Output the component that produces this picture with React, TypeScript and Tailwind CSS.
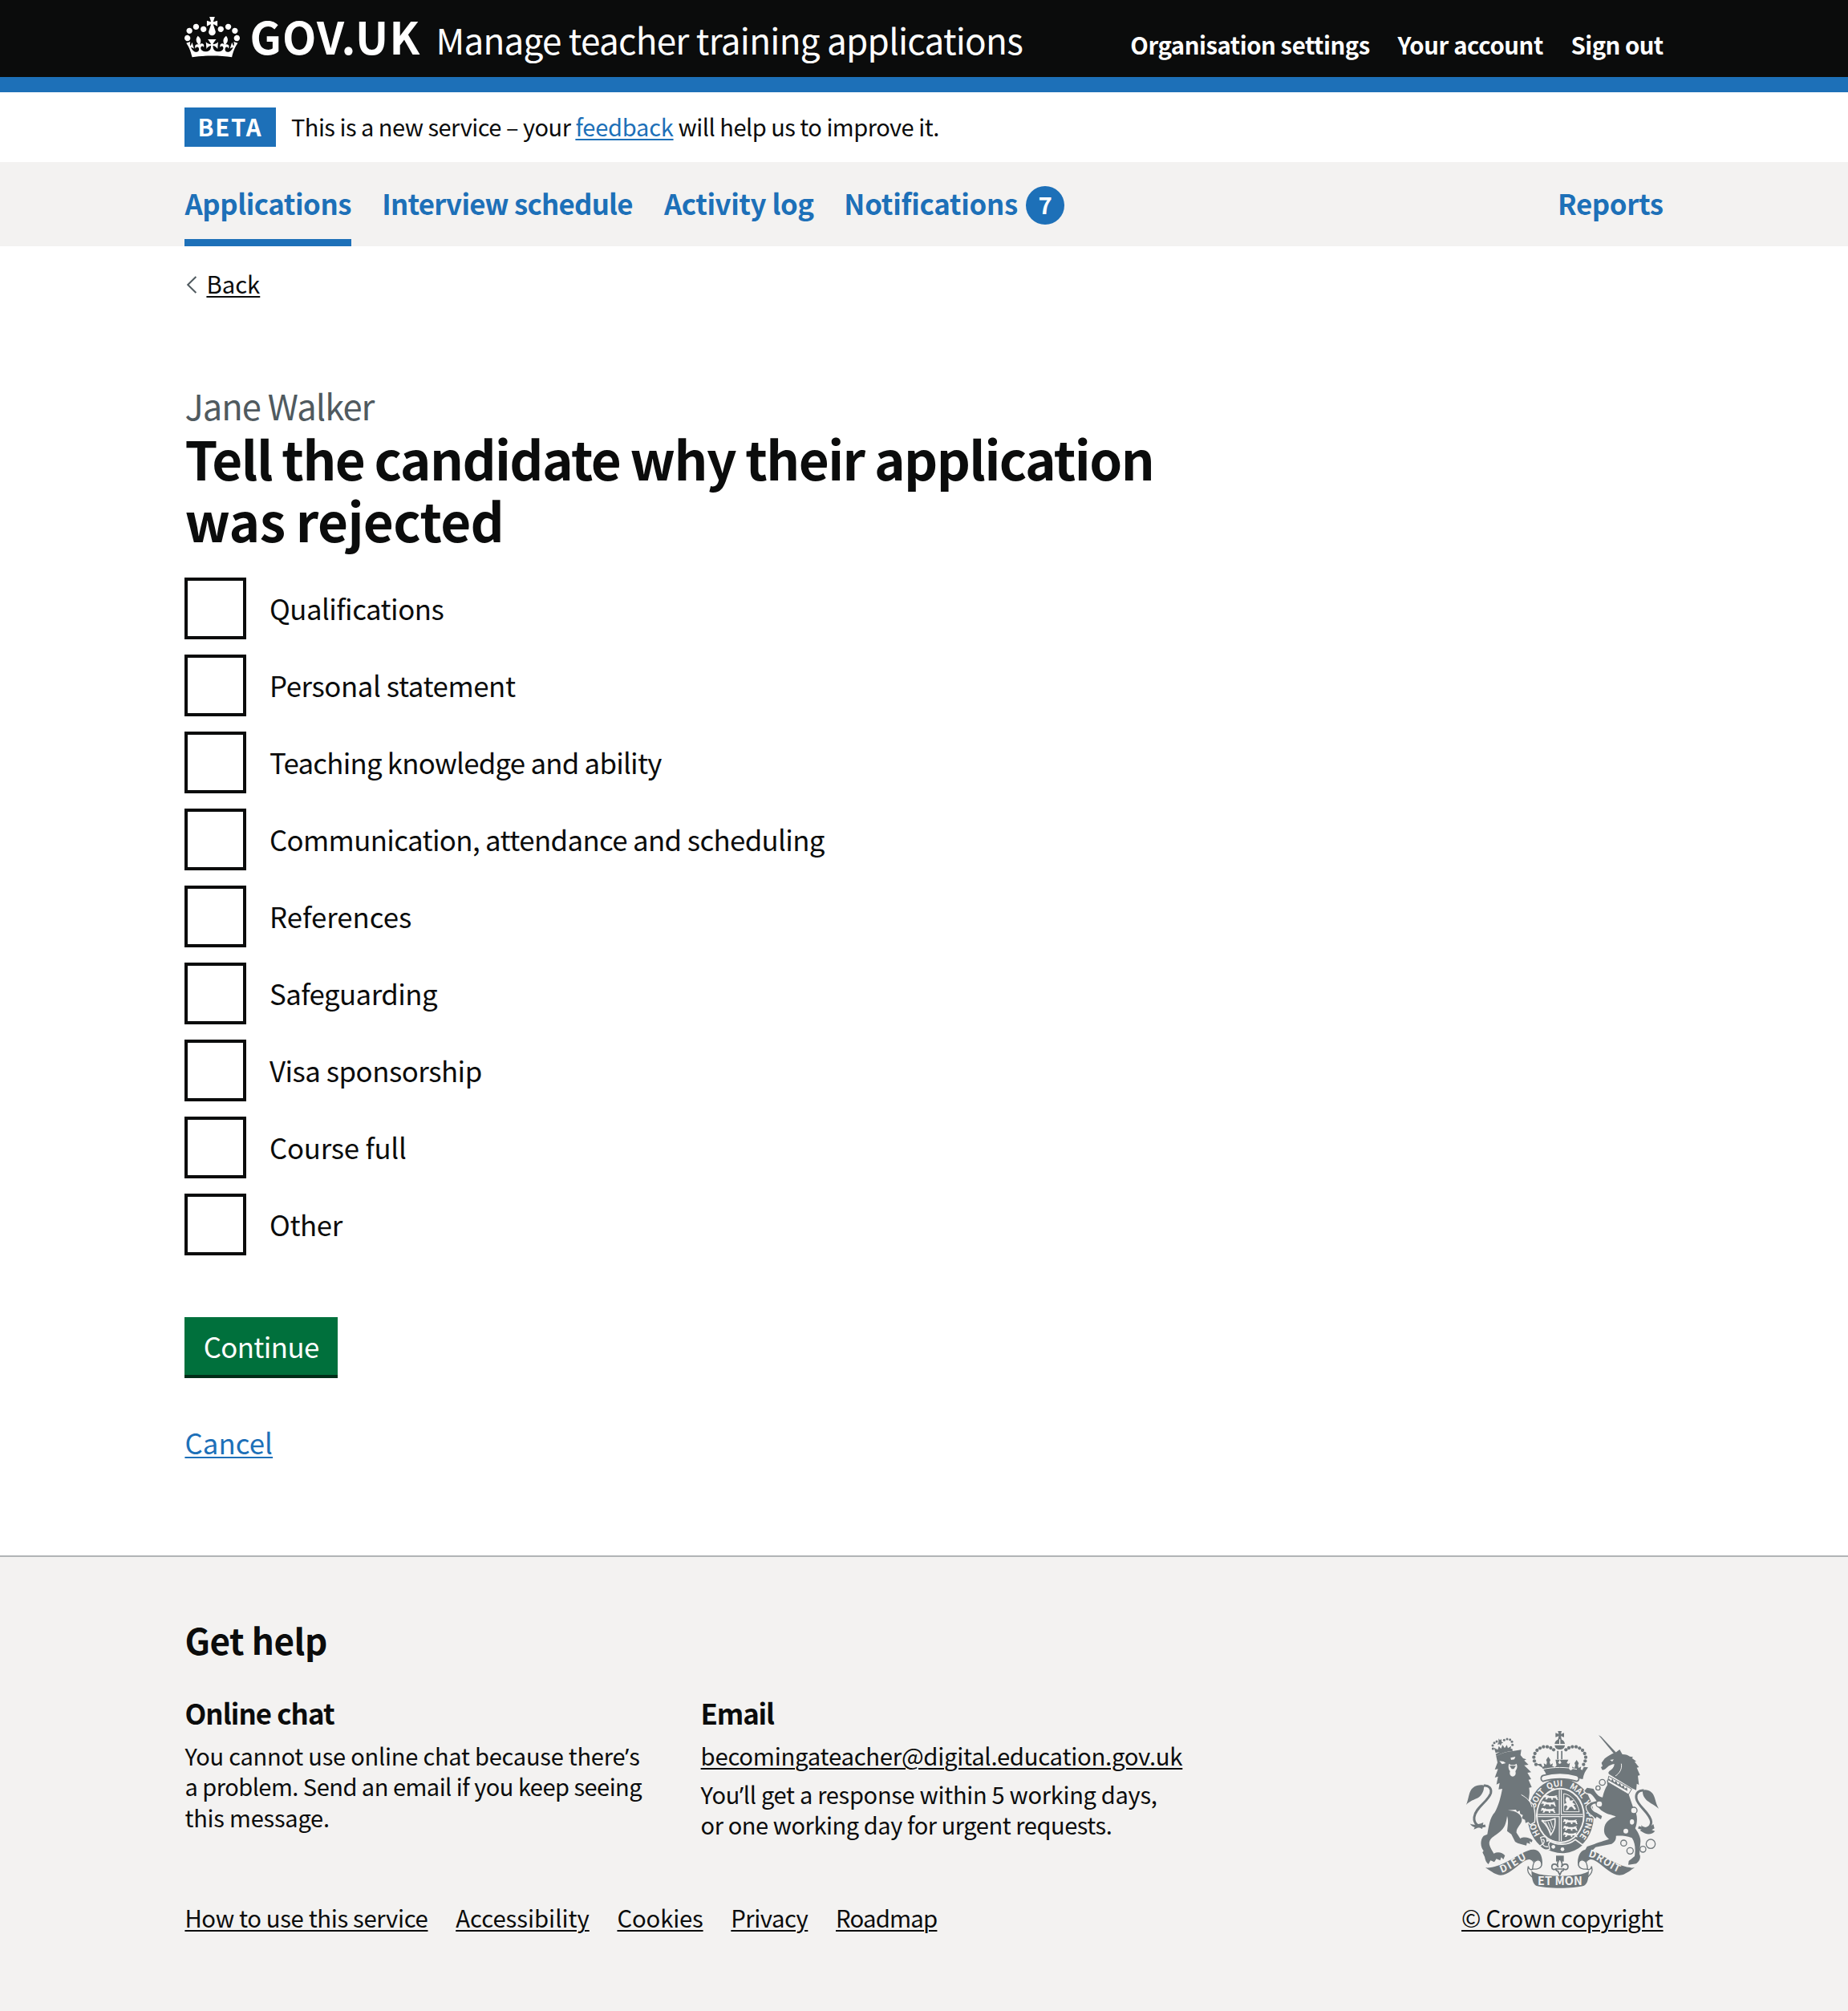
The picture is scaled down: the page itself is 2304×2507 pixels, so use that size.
import type { ReactNode } from 'react'

function Crown() {
  return (
    <svg className="h-[50.7px] w-[69px] shrink-0" viewBox="0 0 132 97" fill="currentColor" aria-hidden="true">
      <path d="M25 30.2c3.5 1.5 7.7-.2 9.1-3.7 1.5-3.6-.2-7.8-3.9-9.2-3.6-1.4-7.6.3-9.1 3.9-1.4 3.5.3 7.5 3.9 9zM9 39.5c3.6 1.5 7.8-.2 9.2-3.7 1.5-3.6-.2-7.8-3.9-9.1-3.6-1.5-7.6.2-9.1 3.8-1.4 3.5.3 7.5 3.8 9zM4.4 57.2c3.5 1.5 7.7-.2 9.1-3.8 1.5-3.6-.2-7.7-3.9-9.1-3.5-1.5-7.6.3-9.1 3.8-1.4 3.5.3 7.6 3.9 9.1zm38.3-21.4c3.5 1.5 7.7-.2 9.1-3.8 1.5-3.6-.2-7.7-3.9-9.1-3.6-1.5-7.6.3-9.1 3.8-1.3 3.6.4 7.7 3.9 9.1zm64.4-5.6c-3.6 1.5-7.8-.2-9.1-3.7-1.5-3.6.2-7.8 3.8-9.2 3.6-1.4 7.7.3 9.2 3.9 1.3 3.5-.4 7.5-3.9 9zm15.9 9.3c-3.6 1.5-7.7-.2-9.1-3.7-1.5-3.6.2-7.8 3.7-9.1 3.6-1.5 7.7.2 9.2 3.8 1.5 3.5-.3 7.5-3.8 9zm4.7 17.7c-3.6 1.5-7.8-.2-9.2-3.8-1.5-3.6.2-7.7 3.9-9.1 3.6-1.5 7.7.3 9.2 3.8 1.3 3.5-.4 7.6-3.9 9.1zM89.3 35.8c-3.6 1.5-7.8-.2-9.2-3.8-1.4-3.6.2-7.7 3.9-9.1 3.6-1.5 7.7.3 9.2 3.8 1.4 3.6-.3 7.7-3.9 9.1zM69.7 17.7l8.9 4.7V9.3l-8.9 2.8c-.2-.3-.5-.6-.9-.9L72.4 0H59.6l3.5 11.2c-.3.3-.6.5-.9.9l-8.8-2.8v13.1l8.8-4.7c.3.3.6.7.9.9l-5 15.4v.1c-.2.8-.4 1.6-.4 2.4 0 4.1 3.1 7.5 7 8.1h.2c.3 0 .7.1 1 .1.4 0 .7 0 1-.1h.2c4-.6 7.1-4.1 7.1-8.1 0-.8-.1-1.7-.4-2.4V34l-5.1-15.4c.4-.2.7-.6 1-.9zM66 92.8c16.9 0 32.8 1.1 47.1 3.2 4-16.9 8.9-26.7 14-33.5l-9.6-3.4c1 4.9 1.1 7.2 0 10.2-1.5-1.4-3-4.3-4.2-8.7L108.6 76c2.8-2 5-3.2 7.5-3.3-4.4 9.4-10 11.9-13.6 11.2-4.3-.8-6.3-4.6-5.6-7.9 1-4.7 5.7-5.9 8-.5 4.3-8.7-3-11.4-7.6-8.8 7.1-7.2 7.9-13.5 2.1-21.1-8 6.1-8.1 12.3-4.5 20.8-4.7-5.4-12.1-2.5-9.5 6.2 3.4-5.2 7.9-2 7.2 3.1-.6 4.3-6.4 7.8-13.5 7.2-10.3-.9-10.9-8-11.2-13.8 2.5-.5 7.1 1.8 11 7.3L80.2 60c-4.1 4.4-8 5.3-12.3 5.4 1.4-4.4 8-11.6 8-11.6H55.5s6.4 7.2 7.9 11.6c-4.2-.1-8-1-12.3-5.4l1.4 16.4c3.9-5.5 8.5-7.7 10.9-7.3-.3 5.8-.9 12.8-11.1 13.8-7.2.6-12.9-2.9-13.5-7.2-.7-5 3.8-8.3 7.1-3.1 2.7-8.7-4.6-11.6-9.4-6.2 3.7-8.5 3.6-14.7-4.6-20.8-5.8 7.6-5 13.9 2.2 21.1-4.7-2.6-11.9.1-7.7 8.8 2.3-5.5 7.1-4.2 8.1.5.7 3.3-1.3 7.1-5.7 7.9-3.5.7-9-1.8-13.5-11.2 2.5.1 4.7 1.3 7.5 3.3l-4.7-15.4c-1.2 4.4-2.7 7.2-4.3 8.7-1.1-3-.9-5.3 0-10.2l-9.5 3.4c5 6.9 9.9 16.7 14 33.5 14.8-2.1 30.8-3.2 47.7-3.2z" />
    </svg>
  )
}

const G = '#6f777b'
const L = '#f3f2f1'

const crownPearls = [
  [345, 209], [339, 196], [337, 182], [341, 168], [349, 156], [360, 148], [373, 143], [387, 143], [400, 147], [411, 154],
]
const chainRings = [
  [593, 276, 11], [577, 297, 8], [582, 357, 12], [711, 381, 12], [673, 503, 11], [697, 532, 12], [745, 526, 11], [774, 506, 17],
]
const garterWords = [
  ['HONI', '13.8%'],
  ['SOIT', '29.5%'],
  ['QUI', '42.5%'],
  ['MAL', '55%'],
  ['Y', '66.5%'],
  ['PENSE', '72.5%'],
]

function Passant({ x, y }: { x: number; y: number }) {
  return (
    <path
      transform={`translate(${x} ${y})`}
      fill={L}
      d="M0 4c4-5 9-5 12-1l4-1 4 3h18c5-1 8-4 14-3l-5 3c4 3 5 6 4 10l4 4h-7l-3-6-9-1-3 4 3 3h-7l-1-6-12-1-4 6h-7l4-6-4-3-5 3-1-4 4-2z"
    />
  )
}

function RoyalArms() {
  return (
    <svg className="h-[196px] w-[240px]" viewBox="84 84 720 588" fill={G} aria-hidden="true">
      {/* garter */}
      <ellipse cx="437" cy="402" rx="124" ry="140" />
      <ellipse cx="436" cy="400" rx="91" ry="104" fill={L} />
      <ellipse cx="436" cy="400" rx="85" ry="98" />
      <path id="garter-line" d="M437 513A97 111 0 0 1 437 291A97 111 0 0 1 437 513" fill="none" />
      {garterWords.map(([word, offset]) => (
        <text key={word} fill={L} fontSize="31" fontWeight="700">
          <textPath href="#garter-line" startOffset={offset}>
            {word}
          </textPath>
        </text>
      ))}
      {/* quarters */}
      <path d="M352 400h168M436 304v192" stroke={L} strokeWidth="11" fill="none" />
      <path d="M352 400h168M436 304v192" stroke={G} strokeWidth="4" fill="none" />
      <Passant x={374} y={322} />
      <Passant x={366} y={346} />
      <Passant x={364} y={371} />
      <Passant x={447} y={413} />
      <Passant x={447} y={438} />
      <Passant x={447} y={462} />
      <path d="M449 318c28 4 50 30 58 68h-58z" fill="none" stroke={L} strokeWidth="3" />
      <path d="M459 330l10 4 4 10 14-2-6 9 12 8-8 2 10 14-6 4-10-12-8 2-6 10-10 2 8-14-6-6-6 4-2-8 10-4-4-12z" fill={L} />
      <path d="M366 418c18 6 34 0 50-6 2 22-2 44-16 60-6-20-18-40-34-54z" fill="none" stroke={L} strokeWidth="5" />
      <path d="M380 424l20 40M390 424l13 32M400 420l8 26" stroke={L} strokeWidth="3" />
      {/* buckle and strap */}
      <path d="M390 492c35 22 75 20 102-2l30 22c-42 38-100 42-150 8z" stroke={L} strokeWidth="5" />
      <path d="M362 482c18-8 26 0 24 14l14-4-8 14 4 20c-14 6-30 0-36-12l10-8z" stroke={L} strokeWidth="4" />
      <path d="M368 490c12-2 8 12 2 18 6 8 12 10 20 8" fill="none" stroke={L} strokeWidth="4" />
      <circle cx="410" cy="517" r="7" fill={L} />
      <circle cx="444" cy="526" r="7" fill={L} />

      {/* central crown */}
      <path d="M427 84h14l-3 11 12-4v16l-12-4 3 14h-14l3-14-12 4V91l12 4z" />
      <path d="M434 115c-11 0-18 8-19 17h38c-1-9-8-17-19-17zM415 137h38c-1 10-8 16-19 16s-18-6-19-16z" />
      <path d="M432 115h4v20h-4z" fill={L} />
      {crownPearls.map(([x, y]) => (
        <g key={x + '-' + y}>
          <circle cx={x} cy={y} r="6.4" />
          <circle cx={868 - x} cy={y} r="6.4" />
        </g>
      ))}
      <path d="M424 158h5v32h-5zM439 158h5v32h-5z" />
      <path d="M346 208l18-2 6 12 6-3-2-10 10 5 2-10-3-8 8-12 8 12-3 8 3 10 9-5-2 10 10 4 6-6-4-22h16l-6 12 6 4 6-4-6-12h32l-6 12 6 4 6-4-4 22 6 6 8-4-2-10 9 5 3-10-3-8 8-12 8 12-3 8 2 10 10-5-2 10 6 3 6-12 16 2c-10 12-17 26-20 44-42-10-90-10-132 0-3-18-11-32-21-44z" />
      <path d="M370 227c42-9 86-9 128 0" fill="none" stroke={L} strokeWidth="3" />
      <path d="M372 250c40-11 86-11 125 0 10 3 12 20 0 22-38-12-88-12-126 0-10-4-9-19 1-22z" fill={L} stroke={G} strokeWidth="5" />

      {/* lion */}
      <path d="M196 178c20-12 42-18 66-20l28-4-3 20 10 12 12 4-8 4 16 16-16 2 26 26-14 2 14 24-10 2 12 28-10 2c4 18 0 34-2 48l16 16c6 20 8 44 5 64l-14 8-8-8-10 4-2-12-12-6 4-12-10-4-2-12-10 4-4-8-30 2c30 2 50 14 52 34 2 18-22 30-20 50l14 22c14-8 34-4 46 6l-3 8-8-4 2 10-12-4-2 10c-16-4-30-6-42-14l-14-28-16-12c2-22 6-40 0-56-4 30-10 44-26 58-16 14-36 22-40 38-4 14 10 32 16 44 16-8 32-4 42 8l-6 14-8-8-4 12-14-6-8 12-14-6-8 14c-8-6-12-16-14-28l-8-16 4-6c-12-14-14-40 0-56l14-6c6-30 8-60 28-82 14-24 22-56 28-88l-14 2 4-24-12 6 6-30-12 4 12-32-12 2 10-26z" stroke={L} strokeWidth="8" paintOrder="stroke" />
      <path d="M244 206c8 6 20 6 28 0 6 12 0 22-4 28 4 14-4 20-10 20s-14-6-10-20c-6-6-8-18-4-28z" fill={L} />
      <path d="M246 214h24l-8 12h-8z" />
      <path d="M208 196l16 2 8 6-14 4zM250 184l18-4-4 10-12 2z" fill={L} />
      <path d="M290 322c20 12 34 22 40 46" fill="none" stroke={L} strokeWidth="3" />
      {/* lion's crown */}
      <path d="M194 170c20-12 40-18 62-20l2 8c-22 2-42 8-61 20zM194 166l-6-20 14 8 4-14 8 10 6-14 8 12 8-12 4 12 12-8-2 14c-18 2-36 6-56 12z" />
      <path d="M205 112l5 6 5-4 2 11 6 2-8 4-1 8-6-6-7 2 4-9z" />
      {[[184, 150], [183, 138], [189, 128], [198, 123], [226, 118], [237, 114], [248, 116], [255, 124], [257, 136]].map(([x, y]) => (
        <circle key={x} cx={x} cy={y} r="4.5" />
      ))}
      {/* lion's tail */}
      <path d="M156 438c-28 8-44-8-42-32 4-36 52-58 62-90 4-18-8-30-26-28" fill="none" stroke={G} strokeWidth="9" />
      <path d="M153 288c-8-4-30-4-44 8-16 14-14 36-25 64 12-14 32-20 44-26 12-8 22-24 22-38zM98 430c10 8 30 4 50-4l-4 24c-6-4-12-6-18-4l-14 6 4-8c-8-2-14-6-18-14z" />

      {/* unicorn */}
      <path d="M579 99l10 6 64 68-8 6z" />
      <path d="M658 153l10 18c14 0 22 4 28 8l12 2-4 4 16 12-6 2 16 20-8 2 12 28-8 2 4 34-8-4-2 24-18-8-78-48c-10-6-10-10-4-16 12-6 18-18 18-26-10 2-20 6-26 12-6 6-14 12-20 10l-4-10 6-4-4-12 12-16c10-8 24-18 40-22z" />
      <path d="M622 192l14-2-6 8z" fill={L} />
      <path d="M664 206c4 18-6 36-22 46" fill="none" stroke={L} strokeWidth="3" />
      <path d="M610 268l80 48 20 58c18 22 14 56 6 74 12 16 20 34 20 48l-4 48c6 12 2 24-12 36l-30 4 2-14 22-18c4-26 2-50-10-68-22-10-46-8-60-8 2 12-4 22-16 30l-60 12-18 18-24-2 10-18 18-6c24-10 48-16 64-22-10-8-20-18-18-38 2-26 22-40 44-46-14-8-32-8-46-18-14-8-22-18-26-30-12-2-20 4-22 12 4 12 12 18 22 22l20 12-4 12-16-10-4 8-12-12c-14-10-24-22-22-36l16-12 22-6c-8-12-14-22-24-28l-14-2-8-8 10-12 24 4c8 16 18 30 34 32 4-18 10-34 18-46z" stroke={L} strokeWidth="7" paintOrder="stroke" />
      <path d="M617 253l86 48-12 20-78-46z" fill={L} stroke={G} strokeWidth="3" />
      <path d="M618 262l8 8 5-8 6 14 8-6 6 14 8-6 6 14 8-6 4 14 8-6 2 14-74-42z" />
      {/* unicorn's tail */}
      <path d="M728 444c24 10 48 4 48-20-4-36-52-58-56-90-2-18 10-30 28-28" fill="none" stroke={G} strokeWidth="9" />
      <path d="M744 306c8-4 22-2 34 8 14 14 12 36 26 60-14-12-28-18-38-26-12-8-22-22-22-36zM738 436c14 14 32 8 46-4l4 16-10 6 12 4c-8 12-30 16-46 4l-10-6 8-6z" />
      <ellipse cx="704" cy="424" rx="8" ry="10" fill={L} />
      <circle cx="681" cy="458" r="9" fill={L} />
      {chainRings.map(([x, y, r]) => (
        <circle key={x} cx={x} cy={y} r={r} fill={L} stroke={G} strokeWidth="4" />
      ))}

      {/* motto scroll */}
      <path d="M312 560c22 4 30 14 26 34-8 14-20 8-22-4-6 20 2 28 14 40M557 560c-22 4-30 14-26 34 8 14 20 8 22-4 6 20-2 28-14 40" fill="none" stroke={G} strokeWidth="4" />
      <path d="M156 595c26 2 54-8 84-24 36-20 72-46 98-44 20 2 30 22 31 48-1 18-10 26-26 26 0-10 2-18-2-26-10-14-26-14-44-2-32 22-56 50-84 50-18 0-32-12-57-28z" />
      <path d="M714 595c-26 2-54-8-84-24-36-20-72-46-98-44-20 2-30 22-31 48 1 18 10 26 26 26 0-10-2-18 2-26 10-14 26-14 44-2 32 22 56 50 84 50 18 0 32-12 57-28z" />
      <path d="M334 586c4-22 30-28 32-4 0 16-18 20-34 18zM536 586c-4-22-30-28-32-4 0 16 18 20 34 18z" fill={L} stroke={G} strokeWidth="4" />
      <path d="M328 606c10 14 60 20 107 20s98-6 108-20c-2 30-4 48-18 56-40 12-140 12-180 0-12-8-16-26-17-56z" />
      <path id="dieu-line" d="M216 614c36-10 66-40 104-54" fill="none" />
      <path id="droit-line" d="M540 554c42 8 74 46 118 60" fill="none" />
      <g fill={L} fontWeight="700">
        <text fontSize="38">
          <textPath href="#dieu-line" textLength="108">DIEU</textPath>
        </text>
        <text fontSize="38">
          <textPath href="#droit-line" textLength="128">DROIT</textPath>
        </text>
        <text x="351" y="661" fontSize="43" textLength="167">ET MON</text>
      </g>
      {/* fleur-de-lis */}
      <path d="M420 550h29v22h-29z" />
      <path d="M434 562c8 10 12 20 6 32 6-16 24-16 25-2 0 10-10 12-16 8 0 6-6 8-8 8l-7 14-7-14c-2 0-8-2-8-8-6 4-15 2-15-8 1-14 18-14 24 2-6-12-2-22 6-32zM418 600h33" fill={L} stroke={G} strokeWidth="5" />
    </svg>
  )
}

function Wrap({ className, children }: { className: string; children: ReactNode }) {
  return <div className={`mx-auto w-[1843.2px] ${className}`}>{children}</div>
}

// The CJK face sets this mark full width, so it is taken from a Latin face.
function Apostrophe() {
  return <span className="font-['Noto_Sans'] leading-none">’</span>
}

const link = 'underline decoration-2 underline-offset-[3px]'

const reasons = [
  ['Qualifications', 'tracking-[-0.53px]'],
  ['Personal statement', 'tracking-[-0.42px]'],
  ['Teaching knowledge and ability', 'tracking-[-0.76px]'],
  ['Communication, attendance and scheduling', 'tracking-[-0.63px]'],
  ['References', 'tracking-normal'],
  ['Safeguarding', 'tracking-[-0.55px]'],
  ['Visa sponsorship', 'tracking-[-0.5px]'],
  ['Course full', 'tracking-[-0.25px]'],
  ['Other', 'tracking-[-0.42px]'],
]

export default function App() {
  return (
    <div className="flex min-h-[2507px] flex-col bg-white font-['Noto_Sans_CJK_SC','Noto_Sans',sans-serif] text-[29.3px] tracking-[-0.32px] text-[#0b0c0c]">
      <header className="h-[115.2px] border-b-[19.2px] border-[#1d70b8] bg-[#0b0c0c] text-white">
        <Wrap className="flex h-[96px]">
          <div className="flex h-[92.5px] items-center">
            <Crown />
          </div>
          <span className="ml-[12px] w-[216px] text-[55px] leading-[88px] font-bold tracking-[1.2px]">GOV.UK</span>
          <span className="ml-[16px] text-[44px] leading-[98px] tracking-[-0.73px]">
            Manage teacher training applications
          </span>
          <nav className="ml-auto flex gap-[34.6px] leading-[110px] font-bold">
            <a className="tracking-[-0.45px]">Organisation settings</a>
            <a className="tracking-[-0.4px]">Your account</a>
            <a className="tracking-[-0.55px]">Sign out</a>
          </nav>
        </Wrap>
      </header>

      <Wrap className="flex h-[86.4px] pt-[19px]">
        <strong className="h-[48.4px] w-[114px] bg-[#1d70b8] pr-[1px] text-center leading-[46px] font-bold tracking-[1.8px] text-white">
          BETA
        </strong>
        <p className="ml-[18.5px] text-[29px] leading-[46px] tracking-[-0.5px]">
          This is a new service – your <a className={`tracking-[-0.2px] text-[#1d70b8] ${link}`}>feedback</a> will help us to
          improve it.
        </p>
      </Wrap>

      <div className="h-[105.6px] bg-[#f3f2f1]">
        <Wrap className="flex h-full gap-[38.4px] text-[34.8px] leading-[102px] font-bold whitespace-nowrap text-[#1d70b8]">
          <a className="h-full w-[207.4px] border-b-[9.6px] border-[#1d70b8] tracking-[-0.45px]">Applications</a>
          <a className="w-[313.4px] tracking-[-0.75px]">Interview schedule</a>
          <a className="w-[186px] tracking-[-0.45px]">Activity log</a>
          <a className="flex tracking-[-0.25px]">
            <span className="w-[226.4px]">Notifications</span>
            <span className="mt-[30.4px] h-[48.4px] w-[48.4px] rounded-full bg-[#1d70b8] text-center text-[29.3px] leading-[45px] text-white">
              7
            </span>
          </a>
          <a className="ml-auto tracking-[-0.4px]">Reports</a>
        </Wrap>
      </div>

      <Wrap className="flex h-[171.8px] pt-[22px]">
        <svg className="mt-[15px] mr-[11px] ml-[2px] h-[22px] w-[14px]" viewBox="0 0 14 22" fill="none" stroke="#505a5f" strokeWidth="2">
          <path d="M12.4 1L2.2 11l10.2 10" />
        </svg>
        <a className={`h-[49px] leading-[49px] tracking-normal ${link}`}>Back</a>
      </Wrap>

      <Wrap className="flex grow flex-col items-start">
        <p className="text-[43.5px] leading-[54px] tracking-[-0.95px] text-[#505a5f]">Jane Walker</p>
        <h1 className="text-[65.5px] leading-[76.8px] font-bold tracking-[-1.55px] whitespace-nowrap [word-spacing:-0.015em]">
          Tell the candidate why their application
          <br />
          <span className="tracking-[-0.6px]">was rejected</span>
        </h1>
        <div className="mt-[33.5px] flex flex-col gap-[19.2px]">
          {reasons.map(([reason, tracking]) => (
            <label key={reason} className="flex h-[76.8px]">
              <span className="h-[76.8px] w-[76.8px] border-[4px] border-[#0b0c0c]" />
              <span className={`ml-[28.8px] text-[34.8px] leading-[76px] ${tracking}`}>{reason}</span>
            </label>
          ))}
        </div>
        <button className="mt-[76.8px] h-[76.8px] w-[190.5px] border-b-[4px] border-[#002d18] bg-[#00703c] text-[34.8px] leading-[70px] tracking-[-0.6px] text-white">
          Continue
        </button>
        <a className={`mt-[54.5px] text-[34.8px] leading-[50px] tracking-[0.1px] text-[#1d70b8] ${link}`}>Cancel</a>
      </Wrap>

      <footer className="h-[568px] border-t-2 border-[#b1b4b6] bg-[#f3f2f1]">
        <Wrap className="pt-[73px]">
          <h2 className="text-[44px] leading-[60px] font-bold tracking-[-0.45px]">Get help</h2>
          <div className="mt-[37px] flex h-[260px]">
            <section className="w-[643.2px]">
              <h3 className="text-[34.8px] leading-[48px] font-bold tracking-[-0.9px]">Online chat</h3>
              <p className="mt-[10px] text-[29px] leading-[38.4px] tracking-[-0.5px]">
                <span className="tracking-[-0.22px]">
                  You cannot use online chat because there
                  <Apostrophe />s
                </span>
                <br />a problem. Send an email if you keep seeing
                <br />
                <span className="tracking-[-0.2px]">this message.</span>
              </p>
            </section>
            <section>
              <h3 className="text-[34.8px] leading-[48px] font-bold tracking-[-1.2px]">Email</h3>
              <p className="mt-[10px] leading-[38.4px] tracking-[-0.27px]">
                <a className={link}>becomingateacher@digital.education.gov.uk</a>
              </p>
              <p className="mt-[9.6px] text-[29px] leading-[38.4px] tracking-[-0.43px]">
                <span className="tracking-[-0.28px]">
                  You
                  <Apostrophe />
                  ll get a response within 5 working days,
                </span>
                <br />
                or one working day for urgent requests.
              </p>
            </section>
            <div className="mt-[46.6px] mr-[6px] ml-auto">
              <RoyalArms />
            </div>
          </div>
          <div className="flex gap-[34.7px] leading-[38.4px]">
            <a className={`tracking-[-0.36px] ${link}`}>How to use this service</a>
            <a className={`tracking-[-0.02px] ${link}`}>Accessibility</a>
            <a className={`tracking-[-0.17px] ${link}`}>Cookies</a>
            <a className={`tracking-[-0.5px] ${link}`}>Privacy</a>
            <a className={`tracking-[-0.8px] ${link}`}>Roadmap</a>
            <a className={`ml-auto tracking-[-0.28px] ${link}`}>© Crown copyright</a>
          </div>
        </Wrap>
      </footer>
    </div>
  )
}
